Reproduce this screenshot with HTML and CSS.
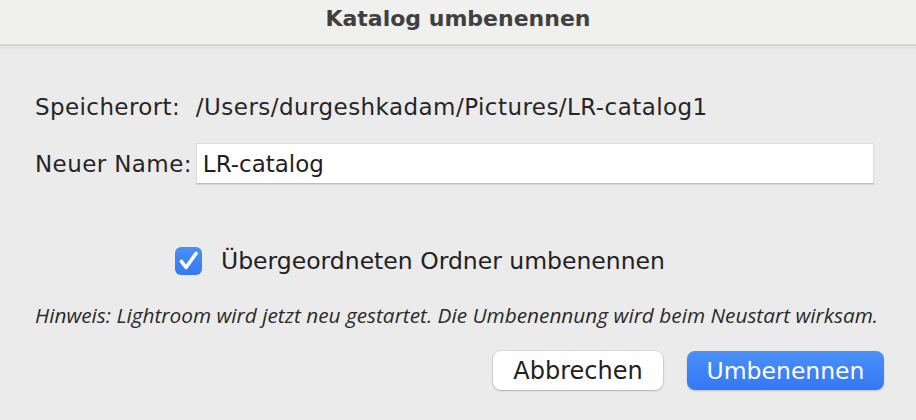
FILE: index.html
```html
<!DOCTYPE html>
<html lang="de">
<head>
<meta charset="utf-8">
<title>Katalog umbenennen</title>
<link rel="stylesheet" href="styles.css">
</head>
<body>
<div class="dialog">
  <header class="titlebar">Katalog umbenennen</header>
  <main class="content">
    <div class="fields">
      <span class="label">Speicherort:</span>
      <span class="value">/Users/durgeshkadam/Pictures/LR-catalog1</span>
      <span class="label">Neuer Name:</span>
      <input class="name-input" type="text" value="LR-catalog">
    </div>
    <label class="check-row">
      <span class="checkbox">
        <svg viewBox="0 0 27 28" width="27" height="28"><path d="M6.5 14.5 L11 20.5 L21 6.5" fill="none" stroke="#fff" stroke-width="3.6" stroke-linecap="round" stroke-linejoin="round"/></svg>
      </span>
      <span class="check-label">Übergeordneten Ordner umbenennen</span>
    </label>
    <p class="hint">Hinweis: Lightroom wird jetzt neu gestartet. Die Umbenennung wird beim Neustart wirksam.</p>
    <div class="buttons">
      <button class="btn btn-cancel" type="button">Abbrechen</button>
      <button class="btn btn-primary" type="button">Umbenennen</button>
    </div>
  </main>
</div>
</body>
</html>
```

FILE: styles.css
```css
html, body {
  margin: 0;
  padding: 0;
  background: #ebebeb;
}
body {
  width: 916px;
  height: 420px;
  overflow: hidden;
  font-family: "DejaVu Sans", "Liberation Sans", sans-serif;
  color: #222;
}
.dialog {
  display: flex;
  flex-direction: column;
}
.titlebar {
  height: 46px;
  box-sizing: border-box;
  background: #f0f0ef;
  border-bottom: 2px solid #d4d4d4;
  box-shadow: 0 3px 0 #e5e5e5;
  text-align: center;
  font-weight: bold;
  font-size: 22px;
  line-height: 38px;
  color: #404040;
}
.content {
  display: flex;
  flex-direction: column;
  padding: 47px 32px 0 35px;
}
.fields {
  display: grid;
  grid-template-columns: auto 1fr;
  column-gap: 4px;
  row-gap: 22px;
  align-items: center;
  margin-right: 10px;
  font-size: 23px;
}
.label, .value {
  line-height: 28px;
  color: #262626;
}
.label {
  letter-spacing: 0.4px;
}
.value {
  letter-spacing: 0.45px;
}
.name-input {
  height: 41px;
  box-sizing: border-box;
  border: 1px solid #dcdcdc;
  border-bottom-color: #bdbdbd;
  background: #fff;
  font-family: inherit;
  font-size: 23px;
  color: #1f1f1f;
  padding: 0 6px;
  outline: none;
  margin: 0;
  box-shadow: 0 1px 1px rgba(0,0,0,0.08);
}
.check-row {
  display: flex;
  align-items: center;
  gap: 19px;
  margin-top: 62px;
  margin-left: 140px;
  font-size: 23.5px;
}
.checkbox {
  width: 27px;
  height: 28px;
  border-radius: 6px;
  background: linear-gradient(#4a8ff8, #3379f3);
  display: flex;
}
.check-label {
  color: #222;
  line-height: 30px;
}
.hint {
  margin: 25px 0 0 0;
  font-family: "Open Sans", "DejaVu Sans", sans-serif;
  font-style: italic;
  font-size: 20.8px;
  line-height: 28px;
  color: #2a2a2a;
}
.buttons {
  display: flex;
  justify-content: flex-end;
  gap: 24px;
  margin-top: 22px;
}
.btn {
  height: 39px;
  border-radius: 8px;
  font-family: "DejaVu Sans", sans-serif;
  font-size: 24px;
  padding: 0;
  cursor: default;
}
.btn-cancel {
  width: 170px;
  background: #fff;
  color: #222;
  border: none;
  box-shadow: 0 0 0 1px rgba(0,0,0,0.08), 0 1px 2px rgba(0,0,0,0.2);
}
.btn-primary {
  width: 197px;
  color: #fff;
  border: none;
  font-size: 23.5px;
  background: linear-gradient(#4b91f8, #3377f5);
  box-shadow: 0 1px 2px rgba(0,0,0,0.18);
}
```
